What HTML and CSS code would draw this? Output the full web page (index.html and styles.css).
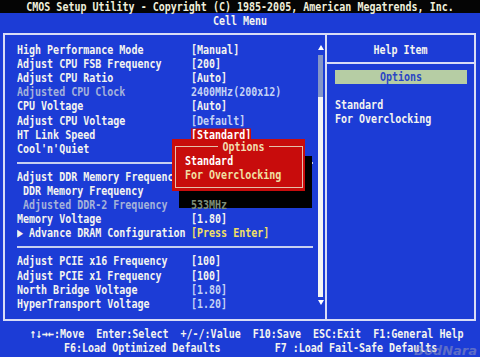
FILE: index.html
```html
<!DOCTYPE html>
<html lang="en">
<head>
  <meta charset="UTF-8">
  <title>CMOS Setup Utility - Cell Menu</title>
  <link rel="stylesheet" href="styles.css">
</head>
<body>
  <div class="screen">
    <div class="title-bar"><span>CMOS Setup Utility - Copyright (C) 1985-2005, American Megatrends, Inc.</span></div>
    <div class="menu-name"><span>Cell Menu</span></div>

    <div class="frame">
      <!-- Settings list -->
      <div class="items-panel">
        <div class="items">
          <div class="row"><span class="label">High Performance Mode</span><span class="value">[Manual]</span></div>
          <div class="row"><span class="label">Adjust CPU FSB Frequency</span><span class="value">[200]</span></div>
          <div class="row"><span class="label">Adjust CPU Ratio</span><span class="value">[Auto]</span></div>
          <div class="row"><span class="label dim">Adjusted CPU Clock</span><span class="value soft">2400MHz(200x12)</span></div>
          <div class="row"><span class="label">CPU Voltage</span><span class="value">[Auto]</span></div>
          <div class="row"><span class="label">Adjust CPU Voltage</span><span class="value soft">[Default]</span></div>
          <div class="row"><span class="label">HT Link Speed</span><span class="value selected">[Standard]</span></div>
          <div class="row"><span class="label">Cool'n'Quiet</span></div>
          <div class="sep"></div>
          <div class="row"><span class="label">Adjust DDR Memory Frequency</span></div>
          <div class="row"><span class="label sub">DDR Memory Frequency</span></div>
          <div class="row"><span class="label sub dim">Adjusted DDR-2 Frequency</span><span class="value shaded">533MHz</span></div>
          <div class="row"><span class="label">Memory Voltage</span><span class="value">[1.80]</span></div>
          <div class="row"><span class="label">▶ Advance DRAM Configuration</span><span class="value enter">[Press Enter]</span></div>
          <div class="sep"></div>
          <div class="row"><span class="label">Adjust PCIE x16 Frequency</span><span class="value">[100]</span></div>
          <div class="row"><span class="label">Adjust PCIE x1 Frequency</span><span class="value">[100]</span></div>
          <div class="row"><span class="label">North Bridge Voltage</span><span class="value soft">[1.80]</span></div>
          <div class="row"><span class="label">HyperTransport Voltage</span><span class="value soft">[1.20]</span></div>
        </div>
        <div class="scrollbar">
          <div class="arrow-up"></div>
          <div class="thumb"></div>
          <div class="track"></div>
          <div class="arrow-down"></div>
        </div>
      </div>

      <!-- Help column -->
      <div class="help-panel">
        <div class="help-head"><span>Help Item</span></div>
        <div class="help-sep"></div>
        <div class="help-body">
          <div class="help-option"><span>Options</span></div>
          <div class="help-line"></div>
          <div class="help-line"><span>Standard</span></div>
          <div class="help-line"><span>For Overclocking</span></div>
        </div>
      </div>
    </div>

    <div class="footer">
      <div class="footer-line first"><span>↑↓→←:Move  Enter:Select  +/-/:Value  F10:Save  ESC:Exit  F1:General Help</span></div>
      <div class="footer-line second"><span>F6:Load Optimized Defaults         F7 :Load Fail-Safe Defaults</span></div>
    </div>

    <!-- Options popup for HT Link Speed -->
    <div class="popup">
      <fieldset>
        <legend><span>Options</span></legend>
        <div class="opt opt-on"><span>Standard</span></div>
        <div class="opt"><span>For Overclocking</span></div>
      </fieldset>
    </div>

    <div class="watermark">BodNara</div>
  </div>
</body>
</html>
```

FILE: styles.css
```css
* {
  box-sizing: border-box;
}

body {
  margin: 0;
  background-color: #000;
}

.screen {
  position: relative;
  width: 480px;
  height: 357px;
  overflow: hidden;
  background-color: #1c3cd6;
  color: #f4f4f0;
  font: bold 10px "DejaVu Sans Mono", monospace;
}

/* BIOS glyphs are taller than the font, stretch every text run */
.screen span {
  display: inline-block;
  line-height: 10px;
  white-space: pre;
  transform: scaleY(1.3);
}

.title-bar {
  height: 13px;
  display: flex;
  align-items: center;
  justify-content: center;
  background-color: #050505;
  color: #f0f0dc;
}

.menu-name {
  height: 15px;
  display: flex;
  align-items: center;
  justify-content: center;
}

/* Main frame */
.frame {
  display: flex;
  width: 473px;
  height: 288px;
  margin: 5px 0 0 3px;
  border: 2px solid #d8dcf6;
}

.items-panel {
  flex: 1;
  display: flex;
  padding: 8px 2px 8px 12px;
}

.items {
  flex: 1;
}

.row {
  height: 14.1px;
  display: flex;
  align-items: center;
}

.label {
  width: 174px;
}

.label.sub {
  padding-left: 6px;
}

.dim {
  color: #a4b2da;
}

.soft {
  color: #c4d2f4;
}

.value.selected {
  background-color: #c80c0c;
  color: #fff;
}

.value.enter {
  color: #f2e064;
}

.value.shaded {
  position: relative;
  z-index: 2;
  color: #7e8e78;
}

.sep {
  height: 14.1px;
  display: flex;
  align-items: center;
  margin-right: 5px;
}

.sep::after {
  content: "";
  flex: 1;
  border-top: 2px solid #c8d0f0;
}

/* Scroll bar */
.scrollbar {
  width: 5px;
  display: flex;
  flex-direction: column;
  align-items: center;
}

.arrow-up {
  margin: 2px 0 5px;
  border-left: 3px solid transparent;
  border-right: 3px solid transparent;
  border-bottom: 5px solid #fff;
}

.thumb {
  width: 5px;
  height: 42px;
  background-color: #8496c8;
}

.track {
  flex: 1;
  width: 5px;
  background-color: #f4f4f4;
}

.arrow-down {
  margin: 3px 0 6px;
  border-left: 3px solid transparent;
  border-right: 3px solid transparent;
  border-top: 5px solid #fff;
}

/* Help column */
.help-panel {
  width: 149px;
  border-left: 2px solid #d8dcf6;
}

.help-head {
  height: 14.1px;
  margin-top: 8px;
  display: flex;
  align-items: center;
  justify-content: center;
}

.help-sep {
  margin-top: 5px;
  border-top: 2px solid #d8dcf6;
}

.help-body {
  padding: 6px 7px 0 8px;
}

.help-option {
  height: 14px;
  display: flex;
  align-items: center;
  justify-content: center;
  background-color: #b6cda4;
  color: #2a46c4;
}

.help-line {
  height: 14.1px;
  display: flex;
  align-items: center;
}

/* Key legend */
.footer {
  margin-top: 6px;
}

.footer-line {
  height: 14px;
  display: flex;
  align-items: center;
}

.footer-line.first {
  padding-left: 30px;
}

.footer-line.second {
  padding-left: 64px;
}

/* Popup */
.popup {
  position: absolute;
  left: 172px;
  top: 139px;
  z-index: 1;
  width: 133px;
  height: 52px;
  padding: 0 2px 0 3px;
  background-color: #c80c0c;
  box-shadow: 7px 17px 0 #000;
}

.popup fieldset {
  height: 49px;
  margin: 0;
  padding: 0 0 0 9px;
  border: 1px solid #e4c0ac;
}

.popup legend {
  margin: 0 auto;
  padding: 2px 4px;
  color: #f2dcb0;
}

.opt {
  height: 14px;
  display: flex;
  align-items: center;
  color: #f0e0a4;
}

.opt-on {
  color: #fff;
}

.watermark {
  position: absolute;
  right: 3px;
  bottom: -1px;
  z-index: 3;
  font: italic bold 13px "DejaVu Sans", sans-serif;
  color: rgba(160, 160, 185, 0.5);
}
```
